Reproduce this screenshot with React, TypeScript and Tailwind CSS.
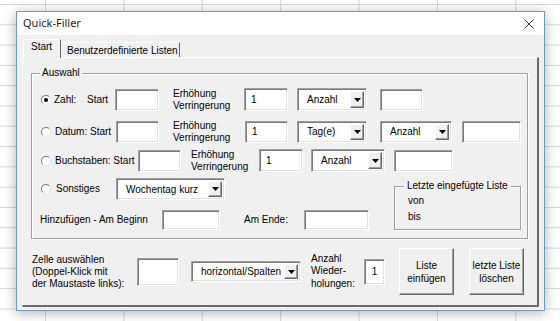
import React from 'react';

const sunken =
  'border border-t-[#a0a0a0] border-l-[#a0a0a0] border-r-white border-b-white bg-white shadow-[inset_1px_1px_0_#7a7a7a,inset_-1px_-1px_0_#e3e3e3]';
const raised =
  'border border-t-white border-l-white border-r-[#696969] border-b-[#696969] bg-[#f0f0f0] shadow-[inset_-1px_-1px_0_#a0a0a0]';

const TextBox: React.FC<{ className: string; value?: string }> = ({ className, value }) => (
  <div className={`${sunken} ${className} flex shrink-0 items-center pl-[6px]`}>{value}</div>
);

const Combo: React.FC<{ className: string; value: string }> = ({ className, value }) => (
  <div className={`${sunken} ${className} flex shrink-0 p-[2px]`}>
    <div className="flex flex-1 items-center pl-[7px] whitespace-nowrap">{value}</div>
    <div className={`${raised} flex w-[14px] items-center justify-center`}>
      <svg width="7" height="4" viewBox="0 0 7 4">
        <path d="M0 0h7L3.5 4z" fill="#000" />
      </svg>
    </div>
  </div>
);

const Radio: React.FC<{ on?: boolean; className: string }> = ({ on, className }) => (
  <span
    className={`${className} flex h-[10px] w-[10px] shrink-0 items-center justify-center rounded-full border border-t-[#7a7a7a] border-l-[#7a7a7a] border-r-[#e3e3e3] border-b-[#e3e3e3] bg-white`}
  >
    {on && <span className="h-[4px] w-[4px] rounded-full bg-black" />}
  </span>
);

const Label: React.FC<{ className: string; children: React.ReactNode }> = ({ className, children }) => (
  <div className={`${className} shrink-0 whitespace-nowrap leading-[12px]`}>{children}</div>
);

export default function App() {
  return (
    <div className="h-[321px] w-[560px] overflow-hidden bg-white bg-[linear-gradient(to_right,#d6d6d6_1px,transparent_1px),linear-gradient(to_bottom,#d6d6d6_1px,transparent_1px)] bg-[size:78.4px_100%,100%_20.3px] bg-[position:45px_0,0_4px] pl-[16px] pt-[11px] font-['Liberation_Sans',Arial,sans-serif] text-[10px] text-black">
      <div className="flex h-[300px] w-[529px] flex-col border border-[#6e98c6] bg-[#f0f0f0] shadow-[0_2px_12px_rgba(0,0,0,0.3)]">
        {/* title bar */}
        <div className="flex h-[23px] items-center justify-between bg-white pl-[6px] pr-[10px] font-['Noto_Sans',sans-serif] text-[11px] text-[#1e1e1e]">
          <span>Quick-Filler</span>
          <svg width="10" height="10" viewBox="0 0 10 10">
            <path d="M0.5 0.5l9 9M9.5 0.5l-9 9" stroke="#333" strokeWidth="1" />
          </svg>
        </div>

        <div className="flex flex-1 flex-col px-[5px] pb-[3px] pt-[4px]">
          {/* tabs */}
          <div className="flex h-[18px] items-end pl-[1px]">
            <div className="relative z-10 -mb-px flex h-[19px] w-[38px] items-start border-l border-r border-t border-l-white border-r-[#696969] border-t-white bg-[#f0f0f0] pl-[7px] pt-[1px] leading-[12px]">
              Start
            </div>
            <div className="flex h-[15px] w-[119px] items-center whitespace-nowrap border-r border-t border-r-[#696969] border-t-white pl-[6px]">
              Benutzerdefinierte Listen
            </div>
          </div>

          {/* tab page */}
          <div className="flex flex-1 flex-col border-b-2 border-l border-r-2 border-t border-b-[#696969] border-l-white border-r-[#696969] border-t-white">
            <fieldset className="ml-[8px] mt-[9px] h-[172px] w-[497px] border border-[#a0a0a0] shadow-[1px_1px_0_#fff,inset_1px_1px_0_#fff]">
              <legend className="ml-[8px] bg-[#f0f0f0] px-[2px] leading-[12px]">Auswahl</legend>

              {/* Zahl */}
              <div className="mt-[9px] flex h-[23px] items-center">
                <Radio on className="ml-[9px]" />
                <Label className="ml-[3px] w-[33px]">Zahl:</Label>
                <Label className="w-[28px]">Start</Label>
                <TextBox className="h-[22px] w-[44px]" />
                <Label className="ml-[14px] w-[71px]">
                  Erhöhung
                  <br />
                  Verringerung
                </Label>
                <TextBox className="h-[23px] w-[44px]" value="1" />
                <Combo className="ml-[9px] h-[23px] w-[70px]" value="Anzahl" />
                <TextBox className="ml-[13px] h-[22px] w-[43px]" />
              </div>

              {/* Datum */}
              <div className="mt-[9px] flex h-[23px] items-center">
                <Radio className="ml-[9px]" />
                <Label className="ml-[4px] w-[61px]">Datum: Start</Label>
                <TextBox className="h-[22px] w-[43px]" />
                <Label className="ml-[14px] w-[72px]">
                  Erhöhung
                  <br />
                  Verringerung
                </Label>
                <TextBox className="h-[22px] w-[43px]" value="1" />
                <Combo className="ml-[9px] h-[22px] w-[70px]" value="Tag(e)" />
                <Combo className="ml-[13px] h-[22px] w-[72px]" value="Anzahl" />
                <TextBox className="ml-[10px] h-[22px] w-[59px]" />
              </div>

              {/* Buchstaben */}
              <div className="mt-[6px] flex h-[23px] items-center">
                <Radio className="ml-[9px]" />
                <Label className="ml-[4px] w-[83px]">Buchstaben: Start</Label>
                <TextBox className="h-[22px] w-[43px]" />
                <Label className="ml-[10px] w-[68px]">
                  Erhöhung
                  <br />
                  Verringerung
                </Label>
                <TextBox className="h-[23px] w-[44px]" value="1" />
                <Combo className="ml-[8px] h-[23px] w-[74px]" value="Anzahl" />
                <TextBox className="ml-[9px] h-[22px] w-[59px]" />
              </div>

              {/* Sonstiges + Hinzufügen / Letzte Liste */}
              <div className="mt-[6px] flex">
                <div className="flex w-[362px] flex-col">
                  <div className="flex h-[22px] items-center">
                    <Radio className="ml-[9px]" />
                    <Label className="ml-[5px] w-[60px]">Sonstiges</Label>
                    <Combo className="h-[22px] w-[109px]" value="Wochentag kurz" />
                  </div>
                  <div className="mt-[10px] flex h-[20px] items-center">
                    <Label className="ml-[8px] w-[122px]">Hinzufügen - Am Beginn</Label>
                    <TextBox className="h-[20px] w-[58px]" />
                    <Label className="ml-[24px] w-[60px]">Am Ende:</Label>
                    <TextBox className="h-[20px] w-[65px]" />
                  </div>
                </div>
                <fieldset className="mt-[2px] h-[50px] w-[127px] border border-[#a0a0a0] shadow-[1px_1px_0_#fff,inset_1px_1px_0_#fff]">
                  <legend className="ml-[9px] whitespace-nowrap bg-[#f0f0f0] px-[3px] leading-[12px]">
                    Letzte eingefügte Liste
                  </legend>
                  <div className="mt-[1px] pl-[13px] leading-[16px]">
                    <div>von</div>
                    <div>bis</div>
                  </div>
                </fieldset>
              </div>
            </fieldset>

            {/* bottom row */}
            <div className="mt-[9px] flex h-[47px] items-center">
              <Label className="ml-[9px] w-[105px]">
                Zelle auswählen
                <br />
                (Doppel-Klick mit
                <br />
                der Maustaste links):
              </Label>
              <TextBox className="h-[28px] w-[42px]" />
              <Combo className="ml-[12px] h-[21px] w-[110px]" value="horizontal/Spalten" />
              <div className="ml-[10px] w-[53px] shrink-0 leading-[12.5px]">
                Anzahl
                <br />
                Wieder-
                <br />
                holungen:
              </div>
              <div className={`${sunken} flex h-[26px] w-[21px] shrink-0 justify-center pt-[4px]`}>1</div>
              <button className={`${raised} ml-[14px] h-[47px] w-[55px] shrink-0 leading-[13px]`}>
                Liste
                <br />
                einfügen
              </button>
              <button className={`${raised} ml-[15px] h-[47px] w-[55px] shrink-0 leading-[13px]`}>
                letzte Liste
                <br />
                löschen
              </button>
            </div>
          </div>
        </div>
      </div>
    </div>
  );
}
